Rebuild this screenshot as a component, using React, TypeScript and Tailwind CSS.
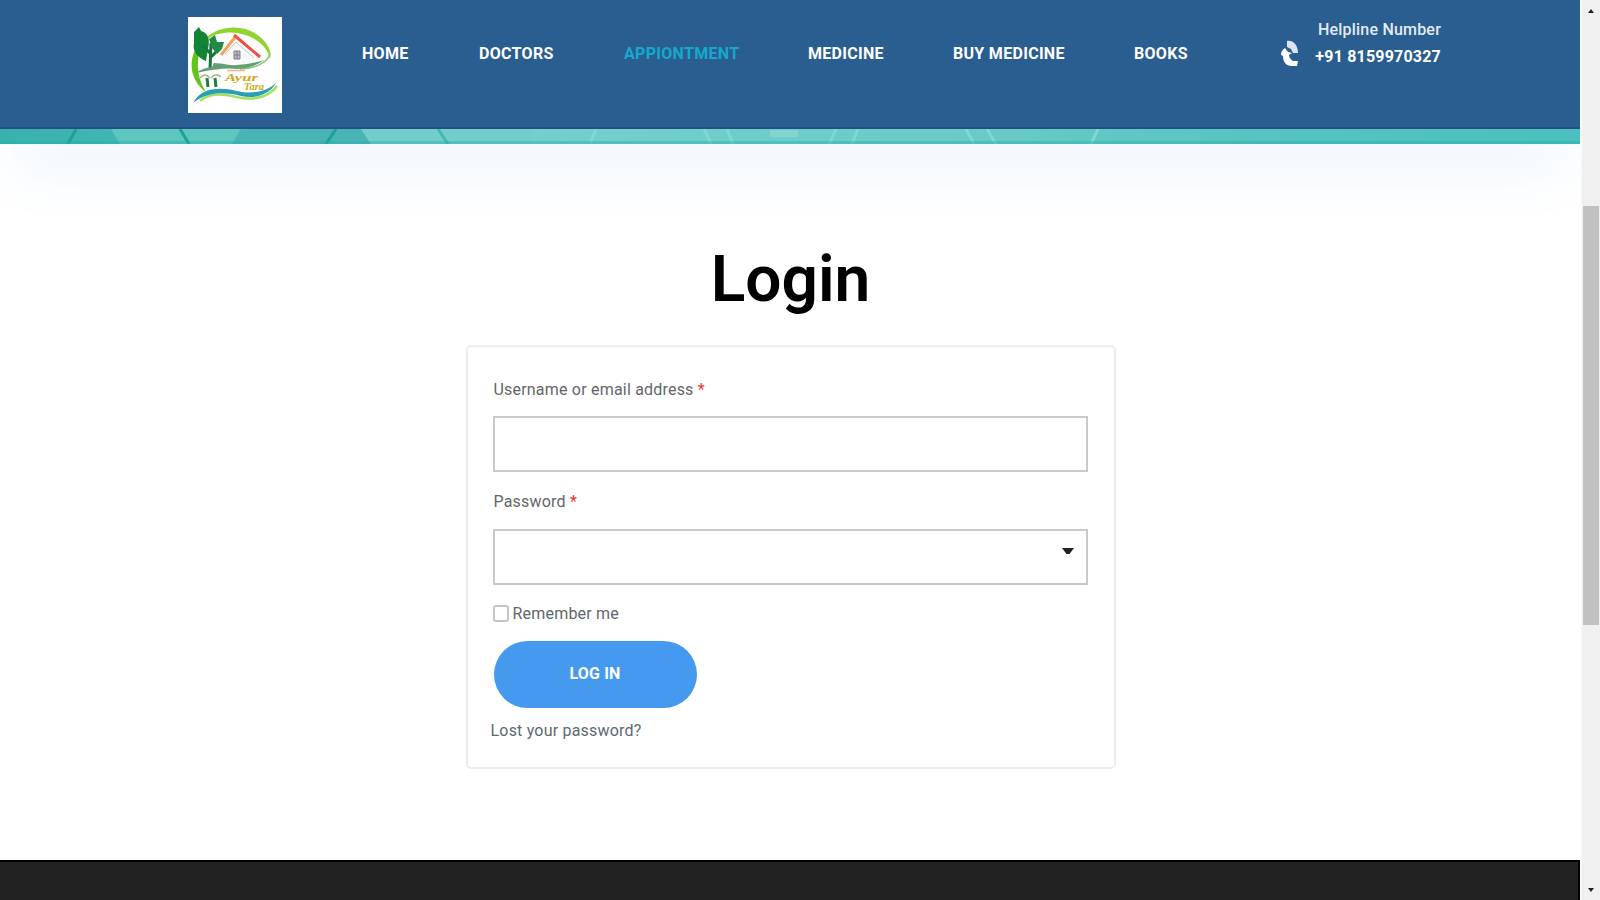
import React, { useState } from 'react';

interface NavItem {
  label: string;
  className: string;
}

const NAV_ITEMS: NavItem[] = [
  { label: 'HOME', className: 'w-[47px] text-white' },
  { label: 'DOCTORS', className: 'w-[75px] text-white' },
  { label: 'APPIONTMENT', className: 'w-[114px] text-[#16a9cd]' },
  { label: 'MEDICINE', className: 'w-[75px] text-white' },
  { label: 'BUY MEDICINE', className: 'w-[111px] text-white' },
  { label: 'BOOKS', className: 'w-[54px] text-white' },
];

const Logo: React.FC = () => (
  <svg viewBox="0 0 94 96" className="w-[94px] h-[96px] bg-white shrink-0">
    {/* Leaf ring around the house */}
    <path d="M18 21 C32 8 56 7 71 19 C81 27 84 36 82 42 C79 25 56 13 36 16 C28 17 23 19 19 23Z" fill="#8fd52b" />
    <path d="M82 37 C79 46 66 52 52 52" fill="none" stroke="#8bc67a" strokeWidth="1.6" />
    <path d="M7 33 C0 48 4 65 18 75 C11 64 8 51 11 36Z" fill="#63c51c" />
    {/* Tree */}
    <path d="M6 15 L11 10 L13 14 C21 16 22 24 20 32 L18 44 C10 41 4 34 6 26Z" fill="#128433" />
    <path d="M22 52 L23 26 M23 37 L14 28 M23 40 L31 32" fill="none" stroke="#16763a" strokeWidth="3" />
    <path d="M21 22 L27 18 L29 25 L36 25 L34 32 L29 37 L24 31Z" fill="#228b43" />
    {/* House */}
    <path d="M34 38 L48 23 L66 39 L66 46 L33 47Z" fill="#f9f9fa" />
    <path d="M33 38 L48 19" fill="none" stroke="#f2a05c" strokeWidth="3" />
    <path d="M46 18 L72 40" fill="none" stroke="#ee5144" strokeWidth="3" />
    <path d="M37 37 L48 25 L66 41" fill="none" stroke="#c4c4ca" strokeWidth="1" />
    <path d="M46 34 H52 V42 H46Z M49 34 V42 M46 38 H52" fill="#b9bac0" stroke="#7d8088" strokeWidth="1" />
    <path d="M26 46 Q32 46 42 48 Q57 49 76 43 Q64 52 49 52 Q35 50 8 56 Q14 51 24 50Z" fill="#649f73" />
    <path d="M39 53.5 H57" stroke="#f1b28b" strokeWidth="1.5" />
    {/* Palms */}
    <path d="M20 70 L19 61 M28 70 L27 61" stroke="#18833b" strokeWidth="3" />
    <path d="M12 61 Q17 55 22 61 M23 61 Q28 55 33 60" fill="none" stroke="#9bb878" strokeWidth="1.3" />
    <text x="37" y="64" textLength="33" lengthAdjust="spacingAndGlyphs" fill="#d2a51c" className="font-['Liberation_Serif'] text-[11px] font-bold italic">Ayur</text>
    <text x="56" y="73" textLength="20" lengthAdjust="spacingAndGlyphs" fill="#c7ad20" className="font-['Liberation_Serif'] text-[11px] font-bold italic">Tara</text>
    {/* River */}
    <path d="M12 84 C25 73 42 79 54 81 C68 83 82 79 89 69" fill="none" stroke="#a5e05c" strokeWidth="2.5" />
    <path d="M5 86 C16 66 40 72 54 75 C69 77 80 73 88 66 C81 78 67 82 53 79 C37 75 20 74 5 86Z" fill="#279fb5" />
  </svg>
);

const PhoneIcon: React.FC = () => (
  <svg viewBox="0 0 20 28" className="w-5 h-7 shrink-0">
    <path d="M7 1 C13 0 18 5 18 13 L13 13 L11 9 L7 7Z" fill="#dce5ef" />
    <path d="M5 8 C2 10 1 12 1 15 L3 16 C3 22 6 26 12 26 L17 26 L18 21 L13 21 C10 19 9 17 9 15 L12 13 L8 12Z" fill="#fff" />
  </svg>
);

const HeroStrip: React.FC = () => (
  <svg viewBox="0 0 1580 15" preserveAspectRatio="none" className="w-full h-[15px] block">
    <defs>
      <linearGradient id="hero">
        <stop offset="0" stopColor="#38b1ae" />
        <stop offset="0.22" stopColor="#55bebb" />
        <stop offset="0.32" stopColor="#74d0cc" />
        <stop offset="0.6" stopColor="#6bcbc7" />
        <stop offset="0.8" stopColor="#56c4c0" />
        <stop offset="1" stopColor="#4bc0bc" />
      </linearGradient>
    </defs>
    <rect width="1580" height="15" fill="url(#hero)" />
    <path d="M111 0 H241 L232 15 H120Z" fill="#5fc6be" />
    <path d="M241 0 H361 L371 15 H232Z" fill="#49b4b5" />
    <path d="M361 0 H533 V15 H371Z" fill="#73cecb" />
    <path d="M76 0 L68 15 M180 0 L189 15 M336 0 L326 15" fill="none" stroke="#1f9f96" strokeWidth="3" />
    <path d="M438 0 L448 15" fill="none" stroke="#43b9ae" strokeWidth="3" />
    <path d="M596 0 L590 15 M704 0 L711 15 M727 0 L733 15 M836 0 L829 15 M858 0 L852 15 M966 0 L974 15 M987 0 L996 15 M1098 0 L1091 15" fill="none" stroke="#7fd8d2" strokeWidth="3" />
    <path d="M770 1 H798 V8 H770Z" fill="#84d5d0" />
    <path d="M0 13.5 H1580" stroke="#22adab" strokeWidth="3" strokeOpacity="0.4" />
  </svg>
);

const FieldLabel: React.FC<{ text: string; htmlFor: string }> = ({ text, htmlFor }) => (
  <label htmlFor={htmlFor} className="block h-6 pl-px text-base leading-6 tracking-[0.2px] text-[#62666b]">
    {text} <span className="text-[#ff2d2d]">*</span>
  </label>
);

export default function App() {
  const [remember, setRemember] = useState(false);

  return (
    <div className="w-[1600px] h-[900px] flex overflow-hidden bg-white font-['Roboto',sans-serif]">
      <div className="w-[1580px] flex flex-col shrink-0">
        {/* HEADER */}
        <header className="h-[129px] shrink-0 bg-[#2a5d90] border-b-2 border-[#205085] flex items-start pl-[188px] pt-[17px]">
          <Logo />
          <nav className="ml-20 mt-[25px] flex gap-[70px]">
            {NAV_ITEMS.map((item) => (
              <a key={item.label} href="#" className={`block text-base leading-6 tracking-[0.3px] font-bold whitespace-nowrap ${item.className}`}>
                {item.label}
              </a>
            ))}
          </nav>
          <div className="ml-[92px] mt-[23px]">
            <PhoneIcon />
          </div>
          <div className="ml-3 w-[129px] text-right text-white whitespace-nowrap">
            <p className="text-base leading-[26px] tracking-[0.2px] font-medium text-[#e4ebf3]">Helpline Number</p>
            <p className="text-base leading-[27px] tracking-[0.2px] font-bold">+91 8159970327</p>
          </div>
        </header>
        <HeroStrip />

        {/* LOGIN */}
        <main className="relative flex-1 flex flex-col items-center pl-px">
          <div className="absolute top-0 inset-x-0 h-24 overflow-hidden pointer-events-none">
            <div className="mx-7 h-5 -mt-5 shadow-[0_10px_60px_10px_rgba(60,160,225,0.12)]" />
          </div>
          <h1 className="mt-24 h-20 text-[64px] leading-[80px] font-semibold text-black">Login</h1>
          <form className="mt-[25px] w-[650px] h-[424px] border-2 border-[#ededed] rounded-[5px] pl-[25px] pt-[31px]" onSubmit={(e) => e.preventDefault()}>
            <FieldLabel text="Username or email address" htmlFor="username" />
            <input id="username" className="mt-[14px] block w-[595px] h-14 border-2 border-[#c6cacd] px-4 outline-none" />
            <div className="mt-[18px]">
              <FieldLabel text="Password" htmlFor="password" />
            </div>
            <div className="relative mt-[15px] w-[595px]">
              <input id="password" type="password" className="block w-full h-14 border-2 border-[#c6cacd] px-4 outline-none" />
              <svg viewBox="0 0 12 8" className="absolute right-[14px] top-[18px] w-3 h-2">
                <path d="M0 1 H12 L7.5 7 H4.5Z" fill="#222" />
              </svg>
            </div>
            <label className="mt-[17px] h-6 flex items-center gap-1 text-base leading-6 tracking-[0.2px] text-[#62666b]">
              <input
                type="checkbox"
                checked={remember}
                onChange={() => setRemember(!remember)}
                className="appearance-none w-4 h-[17px] -mt-px border-2 border-[#c4c4c4] rounded-[3px] bg-white"
              />
              Remember me
            </label>
            <button className="mt-[15px] ml-px block w-[203px] h-[67px] pb-[2px] rounded-full bg-[#459af0] text-base tracking-[0.2px] font-bold text-white">
              LOG IN
            </button>
            <a href="#" className="-ml-[2px] mt-[11px] block h-6 text-base leading-6 tracking-[0.2px] text-[#5d6874]">Lost your password?</a>
          </form>
        </main>

        {/* FOOTER */}
        <footer className="h-10 shrink-0 bg-[#222] border-t-2 border-r-2 border-black" />
      </div>

      {/* SCROLLBAR */}
      <aside className="w-5 h-[900px] shrink-0 bg-[#f0f0f0] border-l-2 border-[#fafafa] flex flex-col items-center">
        <svg viewBox="0 0 6 4" className="mt-[9px] w-1.5 h-1 shrink-0"><path d="M0 4 L3 0 L6 4Z" fill="#222" /></svg>
        <div className="mt-[193px] w-4 h-[419px] shrink-0 bg-[#c1c1c1]" />
        <svg viewBox="0 0 6 4" className="mt-auto mb-2 w-1.5 h-1 shrink-0"><path d="M0 0 H6 L3 4Z" fill="#222" /></svg>
      </aside>
    </div>
  );
}
